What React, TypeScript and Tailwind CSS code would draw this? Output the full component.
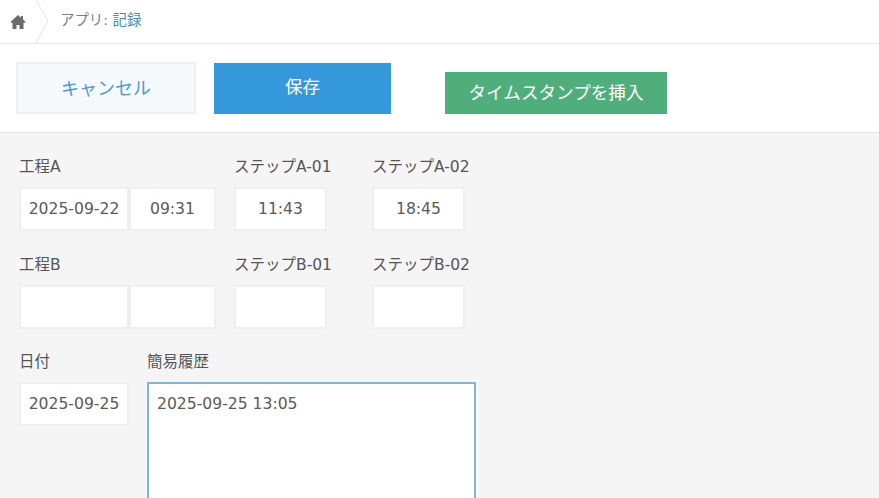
const fontStack = "font-['DejaVu_Sans','Noto_Sans_CJK_JP',sans-serif]";

function Field({ value, className }: { value?: string; className: string }) {
  return (
    <div
      className={`flex h-[44px] items-center justify-center border-2 border-[#efefef] bg-white pt-[1px] text-[15.6px] text-[#5a5a5a] ${className}`}
    >
      {value}
    </div>
  );
}

function Label({ text, className }: { text: string; className: string }) {
  return <div className={`h-[22px] whitespace-nowrap text-[15.5px] leading-[22px] text-[#555555] ${className}`}>{text}</div>;
}

function ProcessRow({
  name,
  step1,
  step2,
  date,
  time,
  v1,
  v2,
}: {
  name: string;
  step1: string;
  step2: string;
  date?: string;
  time?: string;
  v1?: string;
  v2?: string;
}) {
  return (
    <div className="flex">
      <div className="w-[215px]">
        <Label text={name} className="mb-[9px]" />
        <div className="flex">
          <Field value={date} className="w-[110px]" />
          <Field value={time} className="w-[87px]" />
        </div>
      </div>
      <div className="w-[138px]">
        <Label text={step1} className="mb-[9px]" />
        <Field value={v1} className="w-[93px]" />
      </div>
      <div>
        <Label text={step2} className="mb-[9px]" />
        <Field value={v2} className="w-[93px]" />
      </div>
    </div>
  );
}

export default function App() {
  return (
    <div className={`flex h-[498px] w-[879px] flex-col overflow-hidden bg-white ${fontStack}`}>
      <div className="flex h-[44px] shrink-0 items-center border-b border-[#e3e3e3]">
        <div className="flex w-[34px] justify-center pl-[1px]">
          <svg width="16" height="16" viewBox="0 0 16 16" fill="#6b6b6b">
            <path d="M8 1 0.8 7.6v1.2H2.5V15h4v-4h3v4h4V8.8h1.7V7.6L13 5.6V2h-2v1.8z" />
          </svg>
        </div>
        <svg width="16" height="44" viewBox="0 0 16 44" fill="none" stroke="#e3e3e3" strokeWidth="1" className="shrink-0">
          <path d="M2 0 14 21 2 43" />
        </svg>
        <div className="mb-[2px] ml-[10px] text-[14.4px] text-[#808080]">
          アプリ: <span className="text-[#3f8fc4]">記録</span>
        </div>
      </div>

      <div className="flex h-[89px] shrink-0 border-b border-[#e3e3e3] pl-[16px]">
        <button className="mt-[18px] h-[52px] w-[180px] border-2 border-[#f0f0f0] bg-[#f6f9fb] text-[18px] text-[#4f9ad0]">
          キャンセル
        </button>
        <button className="ml-[18px] mt-[19px] h-[51px] w-[177px] bg-[#3498db] pb-[3px] text-[17.5px] text-white">保存</button>
        <button className="ml-[54px] mt-[28px] h-[42px] w-[222px] bg-[#4fae7b] text-[17.6px] text-white">
          タイムスタンプを挿入
        </button>
      </div>

      <div className="flex min-h-0 flex-1 flex-col bg-[#f5f5f5] pl-[19px] pt-[23px]">
        <ProcessRow name="工程A" step1="ステップA-01" step2="ステップA-02" date="2025-09-22" time="09:31" v1="11:43" v2="18:45" />
        <div className="mt-[23px]">
          <ProcessRow name="工程B" step1="ステップB-01" step2="ステップB-02" />
        </div>
        <div className="mt-[22px] flex">
          <div className="w-[128px]">
            <Label text="日付" className="mb-[9px]" />
            <Field value="2025-09-25" className="w-[110px]" />
          </div>
          <div>
            <Label text="簡易履歴" className="mb-[9px]" />
            <div className="h-[140px] w-[329px] border-2 border-[#7fb6d9] bg-white pl-[8px] pt-[9px] text-[15.6px] leading-[22px] text-[#5a5a5a]">
              2025-09-25 13:05
            </div>
          </div>
        </div>
      </div>
    </div>
  );
}
